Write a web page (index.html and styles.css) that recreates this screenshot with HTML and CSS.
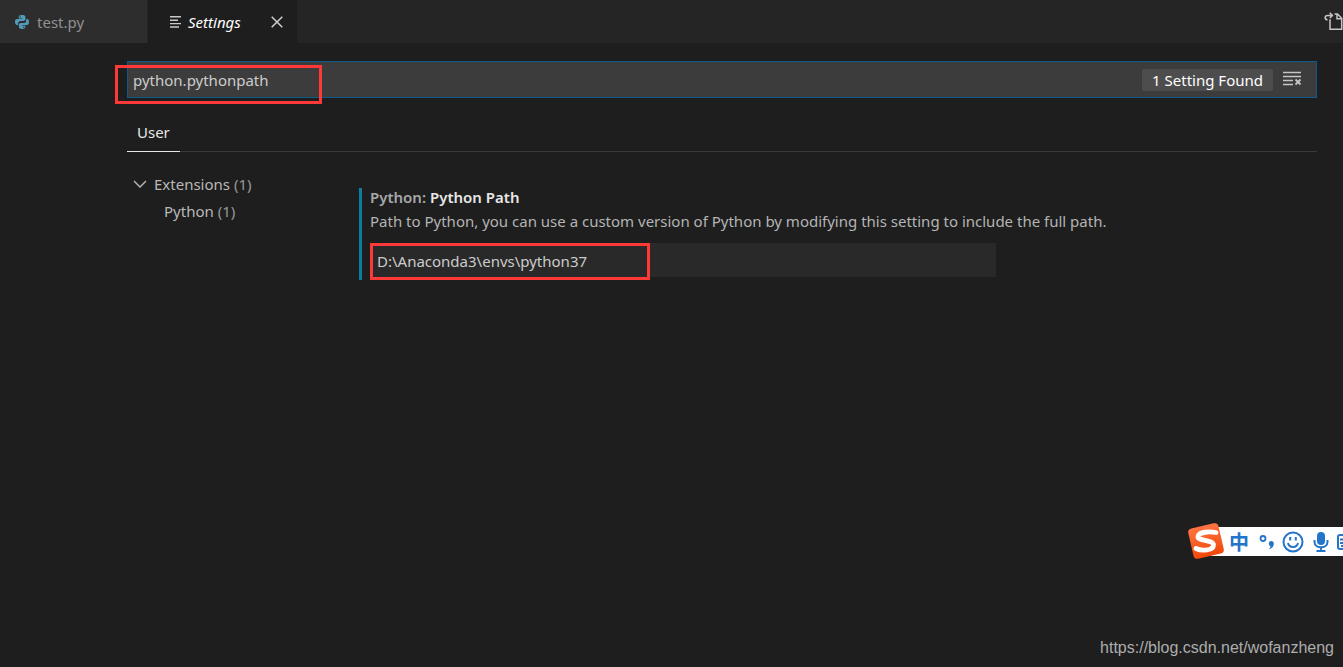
FILE: index.html
```html
<!DOCTYPE html>
<html lang="en">
<head>
<meta charset="utf-8">
<title>Settings</title>
<link rel="stylesheet" href="styles.css">
</head>
<body>
<header class="tab-bar">
  <nav class="tabs">
    <a class="tab" href="#test">
      <svg class="tab-logo" viewBox="0 0 24 24" aria-hidden="true"><path fill="#519aba" d="M11.8 0C8 0 6.3 1.2 6.3 3.3V6h6v1H3.2C1 7 0 9 0 12s1.200 5 3.300 5H5.500v-2.800c0-2.200 1.800-4 4-4h5.200c1.800 0 3.200-1.400 3.200-3.200V3.300C17.900 1.100 15.500 0 11.800 0zM8.900 2a1.200 1.200 0 1 1 0 2.400 1.200 1.200 0 0 1 0-2.400z"/><path fill="#519aba" d="M12.200 24c3.800 0 5.500-1.200 5.500-3.300V18h-6v-1h9.100C23 17 24 15 24 12s-1.200-5-3.300-5h-1.500v2.800c0 2.200-1.800 4-4 4H9.900c-1.800 0-3.200 1.400-3.200 3.200v3.700C6.700 22.900 8.500 24 12.200 24zM15.100 22a1.200 1.200 0 1 1 0-2.400 1.200 1.200 0 0 1 0 2.400z"/></svg>
      <span>test.py</span>
    </a>
    <div class="tab tab-active">
      <svg class="tab-lines" viewBox="0 0 12 12" aria-hidden="true"><path stroke="#c8c8c8" stroke-width="1.400" d="M0 .8h11M0 4.200h8M0 7.600h11M0 11h9"/></svg>
      <a class="tab-name" href="#settings">Settings</a>
      <button class="icon-button" aria-label="Close"><svg class="close-icon" viewBox="0 0 12 12"><path stroke="#d0d0d0" stroke-width="1.500" d="M.7.7l10.600 10.600M11.300.7L.7 11.300"/></svg></button>
    </div>
  </nav>
  <button class="icon-button open-json" aria-label="Open settings file"><svg class="open-icon" viewBox="0 0 19 19"><g fill="none" stroke="#c5c5c5" stroke-width="1.500"><path d="M6 7.200v10h11.700V6.200l-4.200-4.200H10.500M13 2v4.700h4.700"/><path d="M3.500 8C0 6.800.6 3.400 4 3.400h4M5.800.8l2.600 2.600-2.600 2.700"/></g></svg></button>
</header>
<main class="settings">
  <div class="search">
    <input class="search-input" type="text" aria-label="Search settings" value="python.pythonpath">
    <span class="count">1 Setting Found</span>
    <button class="icon-button" aria-label="Clear search"><svg class="clear-icon" viewBox="0 0 19 15"><g stroke="#c5c5c5" stroke-width="1.500"><path d="M0 1.500h18M0 5.500h18M0 9.500h10M0 13.500h10"/><path stroke-width="1.800" d="M12.500 8.500l5 5M17.500 8.500l-5 5"/></g></svg></button>
    <div class="mark mark-search"></div>
  </div>
  <div class="scopes"><button class="scope">User</button></div>
  <div class="columns">
    <nav class="tree">
      <a class="group" href="#extensions"><svg class="chevron" viewBox="0 0 14 8" aria-hidden="true"><path fill="none" stroke="#b0b0b0" stroke-width="1.500" d="M1 1l6 6 6-6"/></svg><span>Extensions <span class="dim">(1)</span></span></a>
      <a class="leaf" href="#python">Python <span class="dim">(1)</span></a>
    </nav>
    <section class="setting">
      <h2 class="title"><span class="category">Python:</span> Python Path</h2>
      <label class="description" for="path">Path to Python, you can use a custom version of Python by modifying this setting to include the full path.</label>
      <div class="field">
        <input class="path-input" id="path" type="text" value="D:\Anaconda3\envs\python37">
        <div class="mark mark-path"></div>
      </div>
    </section>
  </div>
</main>
<aside class="ime">
  <svg class="ime-logo" viewBox="0 0 38 38" aria-hidden="true"><defs><linearGradient id="flame" x2="0" y2="1"><stop stop-color="#ff7442"/><stop offset="1" stop-color="#f04808"/></linearGradient></defs><rect x="3.500" y="3.500" width="31" height="31" rx="4" fill="url(#flame)" transform="rotate(-13 19 19)"/><path fill="none" stroke="#fff" stroke-width="4.800" stroke-linecap="round" d="M29 10.500C23 9.500 12 9.500 11 14.500c-.7 4.700 15.500 3 15.500 8.500 0 5.500-11.500 6.500-17.500 3.500"/></svg>
  <span class="ime-mode" lang="zh">中</span>
  <svg class="ime-punct" viewBox="0 0 16 20" aria-hidden="true"><circle cx="4" cy="6.500" r="2.500" fill="none" stroke="#2475c9" stroke-width="1.800"/><path fill="#2475c9" d="M12 9a2.700 2.700 0 0 0-.5 5.200c0 1.200-.6 2.200-1.700 3 3-.5 5-2.800 5-5.500A2.700 2.700 0 0 0 12 9z"/></svg>
  <svg class="ime-smile" viewBox="0 0 22 22" aria-hidden="true"><g fill="none" stroke="#2475c9" stroke-width="2"><circle cx="11" cy="11" r="9.500"/><path d="M6 12c1 5.300 9 5.300 10 0M8.200 6v3.500M13.800 6v3.500"/></g></svg>
  <svg class="ime-mic" viewBox="0 0 16 22" aria-hidden="true"><rect x="4" y="1" width="8" height="13" rx="4" fill="#2475c9"/><path fill="none" stroke="#2475c9" stroke-width="2" d="M1.500 9v2c0 7 13 7 13 0V9M8 16v4M3.500 20h9"/></svg>
  <svg class="ime-keys" viewBox="0 0 6 16" aria-hidden="true"><g fill="none" stroke="#2475c9" stroke-width="2"><path d="M6 1H3Q1 1 1 3v10q0 2 2 2h3M3 5.500h3M3 9h3M4 12h2"/></g></svg>
</aside>
<footer class="watermark">https://blog.csdn.net/wofanzheng</footer>
</body>
</html>
```
FILE: styles.css
```css
* { box-sizing: border-box; }
body {
  margin: 0;
  min-height: 100vh;
  display: flex;
  flex-direction: column;
  position: relative;
  overflow: hidden;
  background: #1e1e1e;
  color: #b4b4b4;
  font: 15px/24px "Noto Sans", "Open Sans", sans-serif;
}
a { color: inherit; text-decoration: none; }
button, input { font: inherit; color: inherit; border: 0; background: none; padding: 0; }
svg { display: block; flex: none; }
.tab-bar { display: flex; justify-content: space-between; background: #252526; }
.tabs { display: flex; gap: 1px; }
.tab {
  display: flex;
  align-items: center;
  gap: 8px;
  height: 43px;
  width: 147px;
  padding: 0 16px 0 15px;
  background: #2d2d2d;
  color: #909090;
}
.tab-active { width: 149px; padding: 0 14px 0 22px; background: #1e1e1e; color: #fff; font-style: italic; }
.tab-logo { width: 14px; height: 14px; }
.tab-lines { width: 12px; height: 12px; }
.tab-name { flex: 1; margin-left: -2px; }
.icon-button { display: flex; flex: none; }
.close-icon { width: 12px; height: 12px; }
.open-json { align-self: center; }
.open-icon { width: 19px; height: 19px; }
.settings { padding: 18px 26px 0 127px; }
.search {
  display: flex;
  align-items: center;
  position: relative;
  height: 37px;
  padding-right: 14px;
  border: 1px solid #105a8b;
  background: #3c3c3c;
}
.search-input { flex: 1; min-width: 0; height: 35px; padding: 0 5px; color: #ccc; }
.count { padding: 0 10px; margin-right: 10px; line-height: 22px; border-radius: 2px; background: #4d4d4d; color: #fff; }
.clear-icon { width: 19px; height: 15px; margin-bottom: 2px; }
.mark { position: absolute; border: 3px solid #ff3838; pointer-events: none; }
.mark-search { left: -13px; top: 3px; width: 207px; height: 39px; }
.scopes { display: flex; height: 54px; align-items: flex-end; border-bottom: 1px solid #3a3a3a; }
.scope { height: 38px; margin-bottom: -1px; padding: 0 10px 2px; border-bottom: 1px solid #e7e7e7; color: #e7e7e7; }
.columns { display: flex; gap: 40px; }
.tree { width: 192px; padding: 19px 0 0 6px; line-height: 27px; color: #b8b8b8; }
.group { display: flex; align-items: center; gap: 7px; }
.leaf { display: block; padding-left: 31px; }
.chevron { width: 14px; height: 8px; margin-bottom: 2px; }
.dim { color: #999; }
.setting { flex: 1; margin-top: 36px; padding: 0 0 3px 8px; border-left: 3px solid #0c7d9d; }
.title { margin: 0; font-size: 15px; font-weight: 600; line-height: 19px; color: #e7e7e7; }
.category { color: #a8a8a8; }
.description { display: block; line-height: 28px; }
.field { position: relative; margin-top: 8px; max-width: 626px; }
.path-input { width: 100%; height: 34px; padding: 1px 7px 0; background: #292929; color: #ccc; }
.mark-path { left: 0; top: 0; width: 280px; height: 37px; }
.ime {
  position: absolute;
  right: 0;
  bottom: 111px;
  width: 137px;
  height: 29px;
  display: flex;
  align-items: center;
  background: #fff;
  color: #2475c9;
}
.ime-logo { width: 38px; height: 38px; margin: 0 0 2px -19px; }
.ime-mode { width: 22px; margin-left: 3px; text-align: center; font: 700 20px/24px "Noto Sans CJK SC", sans-serif; }
.ime-punct { width: 16px; height: 20px; margin-left: 9px; }
.ime-smile { width: 22px; height: 22px; margin-left: 7px; }
.ime-mic { width: 16px; height: 22px; margin-left: 9px; }
.ime-keys { width: 6px; height: 16px; margin-left: 8px; }
.watermark { margin: auto 9px 9px auto; font: 16px/20px "Liberation Sans", Arial, sans-serif; color: #adadad; }
```
